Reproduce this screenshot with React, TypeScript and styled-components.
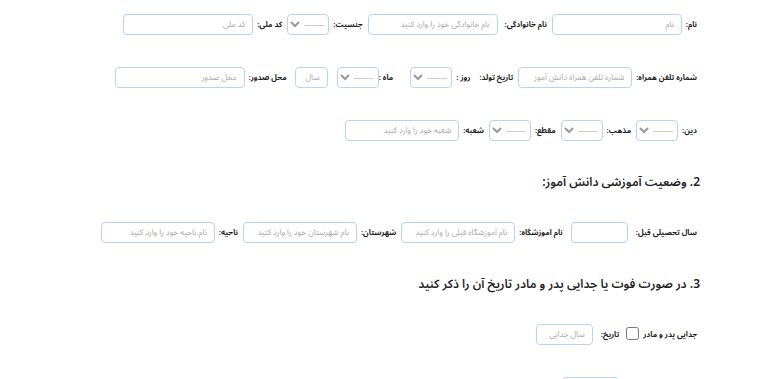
import React from 'react';
import styled, { createGlobalStyle } from 'styled-components';

const GlobalStyle = createGlobalStyle`
    html, body {
        margin: 0;
        padding: 0;
        background: #fff;
    }

    body {
        font-family: 'Noto Sans Arabic', 'DejaVu Sans', sans-serif;
        color: #222;
    }
`;

const Page = styled.div`
    direction: rtl;
    padding: 14px 67px 0 0;
    height: 379px;
    overflow: hidden;
    box-sizing: border-box;
`;

const Row = styled.div`
    display: flex;
    align-items: center;
    height: 21px;
    margin-bottom: 32px;
`;

const Heading = styled.h3`
    margin: 0 -3px 29px 0;
    font-size: 12px;
    line-height: 20px;
    font-weight: 600;
    color: #1f1f1f;
`;

const Label = styled.label<{ $gap?: number }>`
    font-size: 7.6px;
    font-weight: bold;
    color: #222;
    white-space: nowrap;
    margin-left: ${(p) => p.$gap ?? 4}px;
`;

const Field = styled.input<{ $w: number; $after?: number }>`
    box-sizing: border-box;
    width: ${(p) => p.$w}px;
    height: 21px;
    margin-left: ${(p) => p.$after ?? 5}px;
    padding: 0 7px;
    border: 1px solid #b4d5f8;
    border-radius: 4px;
    font-family: inherit;
    font-size: 8px;
    color: #333;
    outline: none;

    &::placeholder {
        color: #a8a8a8;
    }
`;

const Select = styled.select<{ $after?: number }>`
    box-sizing: border-box;
    width: 42px;
    height: 21px;
    margin-left: ${(p) => p.$after ?? 5}px;
    padding: 0;
    border: 1px solid #b4d5f8;
    border-radius: 4px;
    background: #fff;
    font-family: inherit;
    font-size: 7px;
    color: #999;
    outline: none;
`;

const Check = styled.input.attrs({ type: 'checkbox' })`
    width: 13px;
    height: 13px;
    margin: 0 0 5px 7px;
    align-self: flex-end;
`;

const Blank = () => (
    <option value="">---------</option>
);

const App: React.FC = () => {
    return (
        <>
            <GlobalStyle />
            <Page>
                <Row>
                    <Label>نام:</Label>
                    <Field $w={130} placeholder="نام" />
                    <Label $gap={7}>نام خانوادگی:</Label>
                    <Field $w={130} placeholder="نام خانوادگی خود را وارد کنید" />
                    <Label>جنسیت:</Label>
                    <Select>
                        <Blank />
                    </Select>
                    <Label>کد ملی:</Label>
                    <Field $w={130} placeholder="کد ملی" />
                </Row>

                <Row>
                    <Label>شماره تلفن همراه:</Label>
                    <Field $w={114} placeholder="شماره تلفن همراه دانش آموز" />
                    <Label $gap={9}>تاریخ تولد:</Label>
                    <Label>روز :</Label>
                    <Select $after={17}>
                        <Blank />
                    </Select>
                    <Label $gap={0}>ماه :</Label>
                    <Select $after={9}>
                        <Blank />
                    </Select>
                    <Field $w={33} $after={8} placeholder="سال" />
                    <Label>محل صدور:</Label>
                    <Field $w={130} placeholder="محل صدور" />
                </Row>

                <Row>
                    <Label>دین:</Label>
                    <Select>
                        <Blank />
                    </Select>
                    <Label>مذهب:</Label>
                    <Select>
                        <Blank />
                    </Select>
                    <Label>مقطع:</Label>
                    <Select>
                        <Blank />
                    </Select>
                    <Label>شعبه:</Label>
                    <Field $w={114} placeholder="شعبه خود را وارد کنید" />
                </Row>

                <Heading>2. وضعیت آموزشی دانش آموز:</Heading>

                <Row>
                    <Label $gap={8}>سال تحصیلی قبل:</Label>
                    <Field $w={57} $after={8} />
                    <Label>نام آموزشگاه:</Label>
                    <Field $w={114} placeholder="نام آموزشگاه قبلی را وارد کنید" />
                    <Label>شهرستان:</Label>
                    <Field $w={114} placeholder="نام شهرستان خود را وارد کنید" />
                    <Label>ناحیه:</Label>
                    <Field $w={114} placeholder="نام ناحیه خود را وارد کنید" />
                </Row>

                <Heading>3. در صورت فوت یا جدایی پدر و مادر تاریخ آن را ذکر کنید</Heading>

                <Row>
                    <Label $gap={4}>جدایی پدر و مادر</Label>
                    <Check />
                    <Label $gap={8}>تاریخ:</Label>
                    <Field $w={57} placeholder="سال جدایی" />
                </Row>

                <Row>
                    <Label $gap={4}>فوت پدر</Label>
                    <Check />
                    <Label $gap={8}>تاریخ:</Label>
                    <Field $w={57} placeholder="سال فوت" />
                </Row>
            </Page>
        </>
    );
};

export default App;
